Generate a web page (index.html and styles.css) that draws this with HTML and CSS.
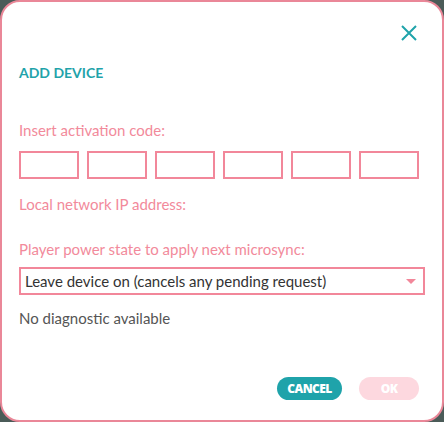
FILE: index.html
```html
<!DOCTYPE html>
<html>
<head>
<meta charset="utf-8">
<link rel="stylesheet" href="styles.css">
</head>
<body>
<div class="dialog">
  <div class="top">
    <button class="close" aria-label="Close">
      <svg width="16" height="16" viewBox="0 0 16 16"><path d="M1 1 L15 15 M15 1 L1 15" stroke="#1fa3aa" stroke-width="2" fill="none"/></svg>
    </button>
  </div>
  <h1 class="title">ADD DEVICE</h1>
  <div class="label first">Insert activation code:</div>
  <div class="codes">
    <input class="code"><input class="code"><input class="code"><input class="code"><input class="code"><input class="code">
  </div>
  <div class="label">Local network IP address:</div>
  <div class="label power">Player power state to apply next microsync:</div>
  <div class="select">
    <span>Leave device on (cancels any pending request)</span>
    <svg class="arrow" width="10" height="5" viewBox="0 0 10 5"><path d="M0 0 L10 0 L5 5 Z" fill="#f2879a"/></svg>
  </div>
  <div class="diag">No diagnostic available</div>
  <div class="actions">
    <button class="btn cancel">CANCEL</button>
    <button class="btn ok">OK</button>
  </div>
</div>
</body>
</html>
```
FILE: styles.css
```css
html, body {
  margin: 0;
  padding: 0;
  background: #4b5b58;
}
.dialog {
  width: 444px;
  height: 422px;
  box-sizing: border-box;
  border: 2px solid #ea8798;
  border-radius: 20px;
  background: #fff;
  padding: 0 17px;
  font-family: Lato, "Open Sans", sans-serif;
  display: flex;
  flex-direction: column;
}
.top {
  display: flex;
  justify-content: flex-end;
  padding-top: 23px;
  margin-right: 8px;
}
.close {
  border: 0;
  background: none;
  padding: 0;
  width: 16px;
  height: 16px;
  display: block;
}
.close svg { display: block; }
.title {
  margin: 24px 0 0;
  font-size: 14px;
  font-weight: 700;
  color: #1fa3aa;
  line-height: 16px;
}
.label {
  font-size: 15px;
  color: #f28a9b;
  line-height: 18px;
}
.label.first { margin-top: 40px; }
.codes {
  display: flex;
  gap: 8px;
  margin-top: 12px;
  margin-bottom: 16px;
}
.code {
  width: 60px;
  height: 28px;
  box-sizing: border-box;
  border: 2px solid #f2879a;
  margin: 0;
  padding: 0;
  background: #fff;
  outline: none;
}
.label.power { margin-top: 27px; }
.select {
  margin-top: 9px;
  height: 28px;
  box-sizing: border-box;
  border: 2px solid #f2879a;
  display: flex;
  align-items: center;
  justify-content: space-between;
  padding: 0 7px 0 4px;
  font-size: 15px;
  color: #333;
}
.diag {
  margin-top: 14px;
  font-size: 15px;
  color: #555;
  line-height: 18px;
}
.actions {
  margin-top: auto;
  margin-bottom: 20px;
  display: flex;
  justify-content: flex-end;
  gap: 17px;
  margin-right: 6px;
}
.btn {
  border: 0;
  height: 23px;
  border-radius: 12px;
  font-family: "Open Sans", Lato, sans-serif;
  font-weight: 800;
  font-size: 12px;
  color: #fff;
  padding: 0;
  letter-spacing: -0.6px;
}
.cancel { width: 65px; background: #1fa3aa; }
.ok { width: 60px; background: #fdd8df; }
```
